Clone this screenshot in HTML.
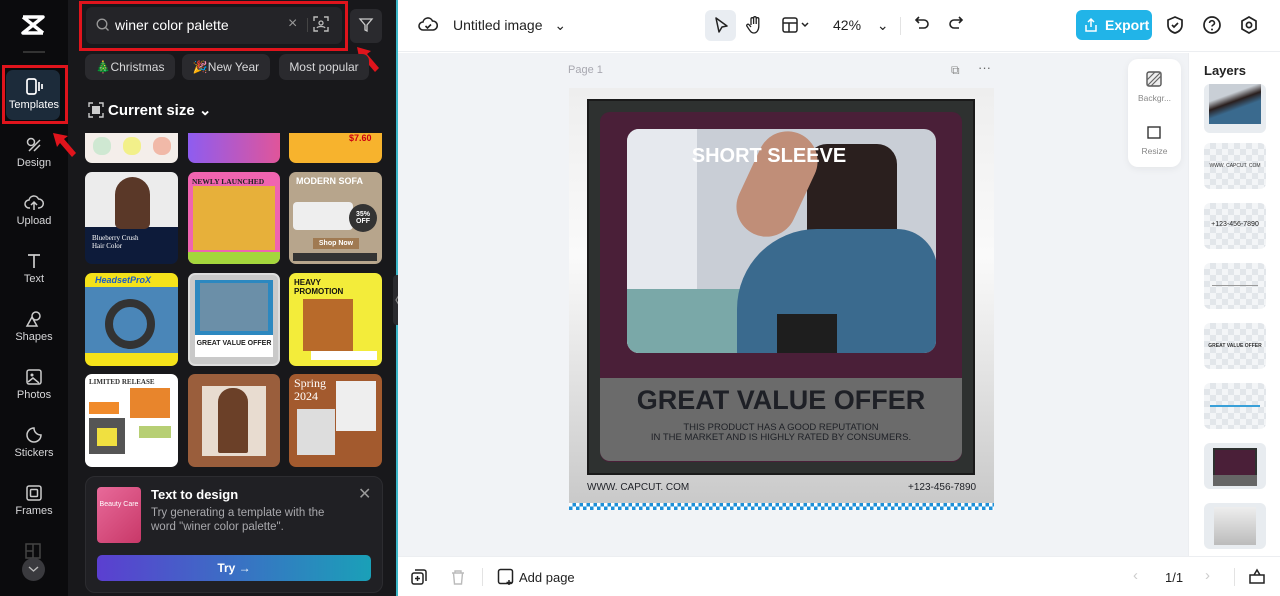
<!DOCTYPE html>
<html><head><meta charset="utf-8"><style>
*{box-sizing:border-box;margin:0;padding:0}
body{width:1280px;height:596px;overflow:hidden;font-family:"Liberation Sans",sans-serif;background:#fff;position:relative}
.abs{position:absolute}
.rail{left:0;top:0;width:68px;height:596px;background:#0b0b0d}
.ri{position:absolute;left:0;width:68px;text-align:center;color:#d6d6d8;font-size:11px}
.ri svg{display:block;margin:0 auto 3px}
.panel{left:68px;top:0;width:329px;height:596px;background:#18181b}
.chip{position:absolute;top:54px;height:26px;background:#2a2a2e;border-radius:7px;color:#d8d8da;font-size:12px;line-height:26px;text-align:center}
.th{position:absolute;border-radius:7px;overflow:hidden}
.tb{position:absolute;border-radius:8px;width:18px;height:18px}
</style></head><body>

<!-- rail -->
<div class="abs rail">
 <svg class="abs" style="left:20px;top:14px" width="26" height="22" viewBox="0 0 26 22"><path d="M3 3h20L3 19h20M3 3l20 16" stroke="#fff" stroke-width="3.5" fill="none" stroke-linejoin="round"/></svg>
 <div class="abs" style="left:23px;top:51px;width:22px;height:2px;background:#333"></div>
 <div class="abs" style="left:6px;top:70px;width:54px;height:50px;background:#1c2b3a;border-radius:7px"></div>
 <div class="ri" style="top:78px;color:#fff;font-size:11px"><svg width="20" height="18" viewBox="0 0 20 18"><rect x="3" y="1" width="9" height="15" rx="2" stroke="#fff" stroke-width="1.7" fill="none"/><path d="M15 4v9M18 6v5" stroke="#fff" stroke-width="1.7"/></svg>Templates</div>
 <div class="abs" style="left:2px;top:65px;width:66px;height:59px;border:3px solid #e0141c"></div>
 <div class="ri" style="top:136px"><svg width="18" height="18" viewBox="0 0 18 18"><circle cx="6" cy="6" r="3.5" stroke="#ccc" stroke-width="1.5" fill="none"/><path d="M9 15l6-6M4 15l11-11" stroke="#ccc" stroke-width="1.5"/></svg>Design</div>
 <div class="ri" style="top:194px"><svg width="20" height="18" viewBox="0 0 20 18"><path d="M6 14H5a4 4 0 010-8 5 5 0 019.5-1A4 4 0 0115 14h-1M10 8v8M7 11l3-3 3 3" stroke="#ccc" stroke-width="1.5" fill="none"/></svg>Upload</div>
 <div class="ri" style="top:252px"><svg width="18" height="18" viewBox="0 0 18 18"><path d="M3 3h12M9 3v13" stroke="#ccc" stroke-width="1.7"/></svg>Text</div>
 <div class="ri" style="top:310px"><svg width="18" height="18" viewBox="0 0 18 18"><circle cx="11" cy="6" r="4" stroke="#ccc" stroke-width="1.5" fill="none"/><path d="M2 16l5-9 5 9z" stroke="#ccc" stroke-width="1.5" fill="none"/></svg>Shapes</div>
 <div class="ri" style="top:368px"><svg width="18" height="18" viewBox="0 0 18 18"><rect x="2" y="2" width="14" height="14" rx="2" stroke="#ccc" stroke-width="1.5" fill="none"/><circle cx="7" cy="7" r="1.5" fill="#ccc"/><path d="M3 14l5-4 6 5" stroke="#ccc" stroke-width="1.5" fill="none"/></svg>Photos</div>
 <div class="ri" style="top:426px"><svg width="18" height="18" viewBox="0 0 18 18"><path d="M16 9a7 7 0 11-7-7c0 4 3 7 7 7z" stroke="#ccc" stroke-width="1.5" fill="none"/></svg>Stickers</div>
 <div class="ri" style="top:484px"><svg width="18" height="18" viewBox="0 0 18 18"><rect x="2" y="2" width="14" height="14" rx="2" stroke="#ccc" stroke-width="1.5" fill="none"/><rect x="5.5" y="5.5" width="7" height="7" rx="1" stroke="#ccc" stroke-width="1.5" fill="none"/></svg>Frames</div>
 <svg class="abs" style="left:25px;top:543px" width="16" height="16"><rect x="1" y="1" width="14" height="14" stroke="#444" stroke-width="1.5" fill="none"/><path d="M8 1v14M1 8h7" stroke="#444" stroke-width="1.5"/></svg>
 <div class="abs" style="left:22px;top:558px;width:23px;height:23px;border-radius:50%;background:#3a3a3e"></div>
 <svg class="abs" style="left:28px;top:565px" width="11" height="8"><path d="M1 2l4.5 4L10 2" stroke="#bbb" stroke-width="1.4" fill="none"/></svg>
</div>

<!-- panel -->
<div class="abs panel">
 <div class="abs" style="left:18px;top:7px;width:256px;height:37px;background:#242428;border-radius:6px"></div>
 <svg class="abs" style="left:28px;top:18px" width="14" height="14"><circle cx="6" cy="6" r="4.8" stroke="#999" stroke-width="1.3" fill="none"/><path d="M9.5 9.5l3 3" stroke="#999" stroke-width="1.3"/></svg>
 <div class="abs" style="left:47px;top:17px;color:#fff;font-size:14px">winer color palette</div>
 <div class="abs" style="left:220px;top:15px;color:#999;font-size:16px">×</div>
 <div class="abs" style="left:239px;top:18px;width:1px;height:14px;background:#444"></div>
 <svg class="abs" style="left:245px;top:16px" width="16" height="16"><path d="M1 5V1h4M11 1h4v4M15 11v4h-4M5 15H1v-4" stroke="#bbb" stroke-width="1.4" fill="none"/><circle cx="8" cy="7" r="2" stroke="#bbb" stroke-width="1.3" fill="none"/><path d="M4 12c1-2 7-2 8 0" stroke="#bbb" stroke-width="1.3" fill="none"/></svg>
 <div class="abs" style="left:11px;top:1px;width:269px;height:50px;border:3.5px solid #e0141c"></div>
 <div class="abs" style="left:282px;top:9px;width:32px;height:34px;background:#2a2a2e;border-radius:6px"></div>
 <svg class="abs" style="left:290px;top:17px" width="16" height="16"><path d="M2 2h12l-5 6v6l-2-1V8z" stroke="#ccc" stroke-width="1.3" fill="none"/></svg>
 <svg class="abs" style="left:283px;top:43px" width="32" height="34"><path d="M6 4l14 4-4 3 12 14-4 4-12-14-3 4z" fill="#e0141c"/></svg>
 <div class="chip" style="left:17px;width:90px">🎄Christmas</div>
 <div class="chip" style="left:114px;width:88px">🎉New Year</div>
 <div class="chip" style="left:211px;width:90px">Most popular</div>
 <svg class="abs" style="left:20px;top:102px" width="16" height="16"><path d="M1 5V1h4M11 1h4v4M15 11v4h-4M5 15H1v-4" stroke="#ccc" stroke-width="1.4" fill="none"/><rect x="4" y="4" width="8" height="8" fill="#ccc"/></svg>
 <div class="abs" style="left:40px;top:101px;color:#fff;font-size:15px;font-weight:bold">Current size ⌄</div>
 <svg class="abs" style="left:-18px;top:130px" width="30" height="36"><path d="M3 3l4 14 3-4 12 14 4-4-12-14 4-3z" fill="#e0141c"/></svg>
 <div class="abs" style="left:0;top:133px;width:329px;height:336px;overflow:hidden">
  <div class="th" style="left:17px;top:-10px;width:93px;height:40px;background:#f4eeea"><div class="tb" style="left:8px;top:14px;background:#cfe8d2"></div><div class="tb" style="left:38px;top:14px;background:#f2f08a"></div><div class="tb" style="left:68px;top:14px;background:#f1b9a8"></div></div>
  <div class="th" style="left:120px;top:-10px;width:92px;height:40px;background:linear-gradient(90deg,#8e5cf0,#e0559a)"></div>
  <div class="th" style="left:221px;top:-10px;width:93px;height:40px;background:#f7b32d"><div class="abs" style="left:60px;top:10px;color:#c01;font-size:9px;font-weight:bold">$7.60</div></div>
  <div class="th" style="left:17px;top:39px;width:93px;height:92px;background:linear-gradient(#ececec 60%,#0d1b3a 60%)"><div class="abs" style="left:30px;top:5px;width:35px;height:52px;background:#5a3828;border-radius:18px 18px 6px 6px"></div><div class="abs" style="left:7px;top:62px;color:#fff;font-size:7px;font-family:'Liberation Serif'">Blueberry Crush<br>Hair Color</div></div>
  <div class="th" style="left:120px;top:39px;width:92px;height:92px;background:#f064b0"><div class="abs" style="left:4px;top:5px;color:#222;font-size:7.5px;font-family:'Liberation Serif';font-weight:bold">NEWLY LAUNCHED</div><div class="abs" style="left:5px;top:14px;width:82px;height:64px;background:#e7b03a"></div><div class="abs" style="left:0;top:80px;width:92px;height:12px;background:#a4d63c"></div></div>
  <div class="th" style="left:221px;top:39px;width:93px;height:92px;background:#b7a58c"><div class="abs" style="left:7px;top:4px;color:#fff;font-size:9px;font-weight:bold">MODERN SOFA</div><div class="abs" style="left:4px;top:30px;width:60px;height:28px;background:#eee;border-radius:4px"></div><div class="abs" style="left:60px;top:32px;width:28px;height:28px;border-radius:50%;background:#333;color:#fff;font-size:7px;text-align:center;padding-top:7px;font-weight:bold">35%<br>OFF</div><div class="abs" style="left:24px;top:66px;width:46px;height:11px;background:#a07a52;color:#fff;font-size:7px;text-align:center;font-weight:bold;line-height:11px">Shop Now</div><div class="abs" style="left:4px;top:81px;width:84px;height:8px;background:#333"></div></div>
  <div class="th" style="left:17px;top:140px;width:93px;height:93px;background:#f5e21a"><div class="abs" style="left:0;top:14px;width:93px;height:66px;background:#4a86b8"></div><div class="abs" style="left:10px;top:2px;color:#1a5dc8;font-size:9px;font-weight:bold;font-style:italic">HeadsetProX</div><div class="abs" style="left:20px;top:26px;width:50px;height:50px;border-radius:50%;border:8px solid #333;background:transparent"></div></div>
  <div class="th" style="left:120px;top:140px;width:92px;height:93px;background:#c9c9c9;border:2px solid #ddd"><div class="abs" style="left:5px;top:5px;width:78px;height:55px;background:#2c88c0"></div><div class="abs" style="left:10px;top:8px;width:68px;height:48px;background:#6b8fa8"></div><div class="abs" style="left:5px;top:60px;width:78px;height:22px;background:#fff;color:#222;font-size:7px;font-weight:bold;text-align:center;padding-top:5px">GREAT VALUE OFFER</div></div>
  <div class="th" style="left:221px;top:140px;width:93px;height:93px;background:#f3ec3a"><div class="abs" style="left:5px;top:5px;color:#111;font-size:8px;font-weight:bold;line-height:9px">HEAVY<br>PROMOTION</div><div class="abs" style="left:14px;top:26px;width:50px;height:52px;background:#b86a2a"></div><div class="abs" style="left:22px;top:78px;width:66px;height:9px;background:#fff"></div></div>
  <div class="th" style="left:17px;top:241px;width:93px;height:93px;background:#fff"><div class="abs" style="left:4px;top:4px;color:#333;font-size:7px;font-family:'Liberation Serif';font-weight:bold">LIMITED RELEASE</div><div class="abs" style="left:45px;top:14px;width:40px;height:30px;background:#e8852c"></div><div class="abs" style="left:4px;top:44px;width:36px;height:36px;background:#555"></div><div class="abs" style="left:12px;top:54px;width:20px;height:18px;background:#f0e040"></div><div class="abs" style="left:54px;top:52px;width:32px;height:12px;background:#b7cf74"></div><div class="abs" style="left:4px;top:28px;width:30px;height:12px;background:#f08a2a"></div></div>
  <div class="th" style="left:120px;top:241px;width:92px;height:93px;background:#9a5e3c"><div class="abs" style="left:14px;top:12px;width:64px;height:70px;background:#e8dcd0"></div><div class="abs" style="left:30px;top:14px;width:30px;height:65px;background:#6b4028;border-radius:14px 14px 2px 2px"></div></div>
  <div class="th" style="left:221px;top:241px;width:93px;height:93px;background:#a35a2e"><div class="abs" style="left:5px;top:3px;color:#fff;font-size:12px;font-family:'Liberation Serif';line-height:13px">Spring<br>2024</div><div class="abs" style="left:47px;top:7px;width:40px;height:50px;background:#eee"></div><div class="abs" style="left:8px;top:35px;width:38px;height:46px;background:#ddd"></div></div>
 </div>
 <div class="abs" style="left:17px;top:476px;width:298px;height:117px;background:#202024;border-radius:10px;border:1px solid #2c2c30"></div>
 <div class="abs" style="left:29px;top:487px;width:44px;height:56px;border-radius:4px;background:linear-gradient(135deg,#e86a9a,#c83868)"><div style="color:#fff;font-size:7px;margin-top:14px;text-align:center">Beauty Care</div></div>
 <div class="abs" style="left:83px;top:487px;color:#fff;font-size:13px;font-weight:bold">Text to design</div>
 <div class="abs" style="left:83px;top:506px;color:#a8a8ac;font-size:11.5px;line-height:14px">Try generating a template with the<br>word "winer color palette".</div>
 <div class="abs" style="left:290px;top:484px;color:#999;font-size:16px">✕</div>
 <div class="abs" style="left:29px;top:555px;width:274px;height:26px;border-radius:5px;background:linear-gradient(90deg,#5b3fd0,#1aa0b8);color:#fff;font-size:12px;font-weight:bold;text-align:center;line-height:26px">Try →</div>
</div>
<div class="abs" style="left:396px;top:0;width:2px;height:596px;background:#3bb6c8"></div>
<div class="abs" style="left:393px;top:275px;width:10px;height:50px;background:#2a2a2e;border-radius:4px"></div>
<svg class="abs" style="left:395px;top:294px" width="6" height="12"><path d="M4 1L1 6l3 5" stroke="#888" stroke-width="1.2" fill="none"/></svg>

<!-- top bar -->
<div class="abs" style="left:398px;top:0;width:882px;height:52px;background:#fff;border-bottom:1px solid #eceef1"></div>
<svg class="abs" style="left:418px;top:15px" width="20" height="20"><path d="M6 15H5a4 4 0 010-8 5 5 0 019.5-1A4 4 0 0115 15z" stroke="#222" stroke-width="1.6" fill="none"/><path d="M7.5 11l2 2 3.5-3.5" stroke="#222" stroke-width="1.6" fill="none"/></svg>
<div class="abs" style="left:453px;top:17px;font-size:14px;color:#222">Untitled image <span style="margin-left:8px">⌄</span></div>
<div class="abs" style="left:705px;top:10px;width:31px;height:31px;background:#e9edf2;border-radius:6px"></div>
<svg class="abs" style="left:712px;top:16px" width="18" height="20"><path d="M4 2l11 8-5 1-3 5z" stroke="#222" stroke-width="1.5" fill="none" stroke-linejoin="round"/></svg>
<svg class="abs" style="left:745px;top:15px" width="18" height="20"><path d="M6 10V4a1.3 1.3 0 012.6 0v5V3a1.3 1.3 0 012.6 0v6V4a1.3 1.3 0 012.6 0v7c0 4-2 7-5 7-2 0-3-1-5-4l-2-3a1.3 1.3 0 012-1.5L6 12" stroke="#222" stroke-width="1.3" fill="none"/></svg>
<svg class="abs" style="left:781px;top:16px" width="30" height="18"><rect x="2" y="2" width="14" height="14" rx="2" stroke="#222" stroke-width="1.5" fill="none"/><path d="M2 7h14M8 7v9M21 7l3 3 3-3" stroke="#222" stroke-width="1.5" fill="none"/></svg>
<div class="abs" style="left:833px;top:17px;font-size:14px;color:#222">42% <span style="margin-left:12px">⌄</span></div>
<div class="abs" style="left:900px;top:17px;width:1px;height:18px;background:#e3e3e3"></div>
<svg class="abs" style="left:913px;top:15px" width="52" height="20"><path d="M4 5h7a4 4 0 010 8H6M6 2L3 5l3 3" stroke="#222" stroke-width="1.6" fill="none"/><path d="M48 5h-7a4 4 0 000 8h5M46 2l3 3-3 3" stroke="#222" stroke-width="1.6" fill="none"/></svg>
<div class="abs" style="left:1076px;top:10px;width:76px;height:30px;background:#21b4e8;border-radius:6px;color:#fff;font-size:14px;font-weight:bold;line-height:30px;padding-left:29px">Export</div>
<svg class="abs" style="left:1083px;top:17px" width="16" height="16"><path d="M3 8v6h10V8M8 10V2M5 5l3-3 3 3" stroke="#fff" stroke-width="1.5" fill="none"/></svg>
<svg class="abs" style="left:1165px;top:15px" width="20" height="20"><path d="M10 2l7 3v5c0 4-3 7-7 8-4-1-7-4-7-8V5z" stroke="#222" stroke-width="1.7" fill="none"/><path d="M7 10l2 2 4-4" stroke="#222" stroke-width="1.7" fill="none"/></svg>
<svg class="abs" style="left:1202px;top:15px" width="20" height="20"><circle cx="10" cy="10" r="8" stroke="#222" stroke-width="1.7" fill="none"/><path d="M7.5 8a2.5 2.5 0 115 .3c0 1.5-2.5 1.7-2.5 3.2" stroke="#222" stroke-width="1.6" fill="none"/><circle cx="10" cy="14.5" r="1" fill="#222"/></svg>
<svg class="abs" style="left:1239px;top:15px" width="20" height="20"><path d="M10 2l7 4v8l-7 4-7-4V6z" stroke="#222" stroke-width="1.7" fill="none"/><circle cx="10" cy="10" r="2.6" stroke="#222" stroke-width="1.7" fill="none"/></svg>

<!-- canvas area -->
<div class="abs" style="left:398px;top:53px;width:790px;height:503px;background:#f1f3f6"></div>
<div class="abs" style="left:568px;top:64px;font-size:11px;color:#a8a8b0">Page 1</div>
<div class="abs" style="left:951px;top:63px;font-size:12px;color:#888">⧉</div>
<div class="abs" style="left:978px;top:60px;font-size:13px;color:#666">···</div>
<div class="abs" style="left:569px;top:88px;width:425px;height:422px;background:linear-gradient(#eee 0%,#fafafa 40%,#c8c8c8 100%)"></div>
<div class="abs" style="left:587px;top:99px;width:388px;height:376px;background:#2e3130;border:2px solid #1a1a1a"></div>
<div class="abs" style="left:600px;top:112px;width:362px;height:350px;border-radius:10px;background:#4a1f38"></div>
<div class="abs" style="left:600px;top:378px;width:362px;height:83px;border-radius:0 0 10px 10px;background:#6b6b6b"></div>
<div class="abs" style="left:627px;top:129px;width:309px;height:224px;border-radius:12px;overflow:hidden;background:#c9ced6">
 <div class="abs" style="left:0;top:0;width:70px;height:224px;background:#e6e9ee"></div>
 <div class="abs" style="left:0;top:160px;width:120px;height:64px;background:#7aa8a8"></div>
 <div class="abs" style="left:180px;top:15px;width:90px;height:95px;background:#2a1f1e;border-radius:20px 20px 10px 10px"></div>
 <div class="abs" style="left:110px;top:100px;width:200px;height:124px;background:#3a6a8e;border-radius:80px 40px 0 0"></div>
 <div class="abs" style="left:120px;top:0;width:60px;height:110px;background:#c08e78;border-radius:30px;transform:rotate(25deg)"></div>
 <div class="abs" style="left:150px;top:185px;width:60px;height:39px;background:#1e1e1e"></div>
</div>
<div class="abs" style="left:627px;top:145px;width:284px;text-align:center;color:#fff;font-size:20px;font-weight:bold">SHORT SLEEVE</div>
<div class="abs" style="left:600px;top:385px;width:362px;text-align:center;color:#1e2026;font-size:27px;font-weight:bold">GREAT VALUE OFFER</div>
<div class="abs" style="left:600px;top:423px;width:362px;text-align:center;color:#1e2026;font-size:9.5px;line-height:10px">THIS PRODUCT HAS A GOOD  REPUTATION<br>IN THE MARKET AND IS HIGHLY RATED BY CONSUMERS.</div>
<div class="abs" style="left:587px;top:482px;font-size:10px;color:#1e2026">WWW. CAPCUT. COM</div>
<div class="abs" style="left:908px;top:482px;font-size:10px;color:#1e2026">+123-456-7890</div>
<div class="abs" style="left:569px;top:503px;width:425px;height:7px;background:repeating-conic-gradient(#1f90d8 0 25%,#ffffff 0 50%) 0 0/7px 7px"></div>
<div class="abs" style="left:1128px;top:59px;width:53px;height:108px;background:#fff;border-radius:10px;box-shadow:0 2px 8px rgba(0,0,0,.06)"></div>
<svg class="abs" style="left:1146px;top:71px" width="16" height="16"><rect x="1" y="1" width="14" height="14" rx="2" stroke="#555" stroke-width="1.4" fill="#eee"/><path d="M1 9l8-8M5 15l10-10M1 15L15 1" stroke="#666" stroke-width="1.2"/></svg>
<div class="abs" style="left:1128px;top:93px;width:53px;text-align:center;font-size:8.5px;color:#888">Backgr...</div>
<svg class="abs" style="left:1146px;top:124px" width="16" height="16"><rect x="2" y="3" width="12" height="11" stroke="#333" stroke-width="1.4" fill="none"/></svg>
<div class="abs" style="left:1128px;top:146px;width:53px;text-align:center;font-size:8.5px;color:#888">Resize</div>

<!-- layers -->
<div class="abs" style="left:1188px;top:53px;width:92px;height:503px;background:#fff;border-left:1px solid #eceef1"></div>
<div class="abs" style="left:1204px;top:63px;font-size:13px;font-weight:bold;color:#222">Layers</div>
<div class="abs" style="left:1204px;top:84px;width:62px;height:49px;border-radius:6px;background:#e8ecf0;overflow:hidden"><div style="margin:0 5px;height:40px;background:linear-gradient(160deg,#c9cfd6 30%,#2a1f1e 45%,#3a6a8e 60%)"></div></div>
<div style="position:absolute;left:1204px;top:143px">
 <div style="position:absolute;left:0;top:0;width:62px;height:46px;border-radius:6px;background:repeating-conic-gradient(#e2e6ea 0 25%,#f3f5f7 0 50%) 0 0/12px 12px"><div style="font-size:5px;text-align:center;margin-top:20px;color:#333">WWW. CAPCUT. COM</div></div>
 <div style="position:absolute;left:0;top:60px;width:62px;height:46px;border-radius:6px;background:repeating-conic-gradient(#e2e6ea 0 25%,#f3f5f7 0 50%) 0 0/12px 12px"><div style="font-size:7px;text-align:center;margin-top:18px;color:#222">+123-456-7890</div></div>
 <div style="position:absolute;left:0;top:120px;width:62px;height:46px;border-radius:6px;background:repeating-conic-gradient(#e2e6ea 0 25%,#f3f5f7 0 50%) 0 0/12px 12px"><div style="margin:22px 8px 0;height:1px;background:#999"></div></div>
 <div style="position:absolute;left:0;top:180px;width:62px;height:46px;border-radius:6px;background:repeating-conic-gradient(#e2e6ea 0 25%,#f3f5f7 0 50%) 0 0/12px 12px"><div style="font-size:5px;font-weight:bold;text-align:center;margin-top:20px;color:#333">GREAT VALUE OFFER</div></div>
 <div style="position:absolute;left:0;top:240px;width:62px;height:46px;border-radius:6px;background:repeating-conic-gradient(#e2e6ea 0 25%,#f3f5f7 0 50%) 0 0/12px 12px"><div style="margin:22px 6px 0;height:2px;background:#3aa0d8"></div></div>
 <div style="position:absolute;left:0;top:300px;width:62px;height:46px;border-radius:6px;background:#e8ecf0"><div style="position:absolute;left:9px;top:5px;width:44px;height:38px;background:#4a1f38;border:2px solid #2e3130"></div><div style="position:absolute;left:9px;top:32px;width:44px;height:11px;background:#666"></div></div>
 <div style="position:absolute;left:0;top:360px;width:62px;height:46px;border-radius:6px;background:#e8ecf0"><div style="position:absolute;left:10px;top:4px;width:42px;height:38px;background:linear-gradient(#eee,#bbb)"></div></div>
</div>

<!-- bottom bar -->
<div class="abs" style="left:398px;top:556px;width:882px;height:40px;background:#fff;border-top:1px solid #eceef1"></div>
<svg class="abs" style="left:411px;top:569px" width="16" height="16"><rect x="1" y="4" width="11" height="11" rx="2" stroke="#222" stroke-width="1.5" fill="none"/><path d="M4 1h9a2 2 0 012 2v9M6.5 7v5M4 9.5h5" stroke="#222" stroke-width="1.5" fill="none"/></svg>
<svg class="abs" style="left:450px;top:569px" width="16" height="16"><path d="M2 4h12M5 4V2h6v2M3.5 4l1 11h7l1-11" stroke="#bbb" stroke-width="1.4" fill="none"/></svg>
<div class="abs" style="left:482px;top:568px;width:1px;height:18px;background:#e3e3e3"></div>
<svg class="abs" style="left:497px;top:568px" width="18" height="18"><rect x="1.5" y="1.5" width="14" height="14" rx="2" stroke="#222" stroke-width="1.5" fill="none"/><path d="M12 12v5M9.5 14.5h5" stroke="#222" stroke-width="1.5"/></svg>
<div class="abs" style="left:519px;top:570px;font-size:13px;color:#222">Add page</div>
<div class="abs" style="left:1133px;top:567px;font-size:15px;color:#ccc">‹</div>
<div class="abs" style="left:1165px;top:570px;font-size:13px;color:#222">1/1</div>
<div class="abs" style="left:1205px;top:567px;font-size:15px;color:#ccc">›</div>
<div class="abs" style="left:1234px;top:568px;width:1px;height:18px;background:#e3e3e3"></div>
<svg class="abs" style="left:1248px;top:567px" width="18" height="18"><path d="M2 8h14v8H2zM6 8l3-5 3 5" stroke="#222" stroke-width="1.5" fill="none"/></svg>
</body></html>
